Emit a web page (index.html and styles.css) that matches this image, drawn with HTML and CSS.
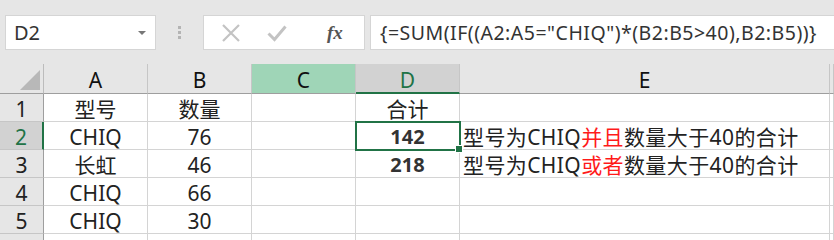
FILE: index.html
```html
<!DOCTYPE html>
<html>
    <head>
        <link rel="stylesheet" href="styles.css">
    </head>
    <body>
        <div class="toolbar">
            <div class="nameBox">
                <span>D2</span>
                <span class="dropArrow"></span>
            </div>
            <div class="grip"><i></i><i></i><i></i></div>
            <div class="fxButtons">
                <svg class="btn" width="20" height="20" viewBox="0 0 20 20"><path d="M2 2 L18 18 M18 2 L2 18" stroke="#c3c3c3" stroke-width="2.2" fill="none"/></svg>
                <svg class="btn" width="20" height="20" viewBox="0 0 20 20"><path d="M1.5 10.5 L7.5 16.5 L18.5 3.5" stroke="#c3c3c3" stroke-width="3" fill="none"/></svg>
                <span class="fx">fx</span>
            </div>
            <div class="formula">{=SUM(IF((A2:A5="CHIQ")*(B2:B5&gt;40),B2:B5))}</div>
        </div>

        <div class="sheet">
            <div class="corner"><span class="tri"></span></div>
            <div class="colHead">A</div>
            <div class="colHead">B</div>
            <div class="colHead hover">C</div>
            <div class="colHead active">D</div>
            <div class="colHead">E</div>
            <div class="colHead"></div>

            <div class="rowHead">1</div>
            <div class="cell">型号</div>
            <div class="cell">数量</div>
            <div class="cell"></div>
            <div class="cell">合计</div>
            <div class="cell"></div>
            <div class="cell"></div>

            <div class="rowHead active">2</div>
            <div class="cell">CHIQ</div>
            <div class="cell">76</div>
            <div class="cell"></div>
            <div class="cell bold selected">142</div>
            <div class="cell left">型号为CHIQ<span class="red">并且</span>数量大于40的合计</div>
            <div class="cell"></div>

            <div class="rowHead">3</div>
            <div class="cell">长虹</div>
            <div class="cell">46</div>
            <div class="cell"></div>
            <div class="cell bold">218</div>
            <div class="cell left">型号为CHIQ<span class="red">或者</span>数量大于40的合计</div>
            <div class="cell"></div>

            <div class="rowHead">4</div>
            <div class="cell">CHIQ</div>
            <div class="cell">66</div>
            <div class="cell"></div>
            <div class="cell"></div>
            <div class="cell"></div>
            <div class="cell"></div>

            <div class="rowHead">5</div>
            <div class="cell">CHIQ</div>
            <div class="cell">30</div>
            <div class="cell"></div>
            <div class="cell"></div>
            <div class="cell"></div>
            <div class="cell"></div>

            <div class="rowHead"></div>
            <div class="cell"></div>
            <div class="cell"></div>
            <div class="cell"></div>
            <div class="cell"></div>
            <div class="cell"></div>
            <div class="cell"></div>
        </div>
    </body>
</html>
```

FILE: styles.css
```css
body {
    margin: 0;
    height: 240px;
    background: white;
    font-family: "Noto Sans", "Noto Sans CJK SC", sans-serif;
    color: #222;
    overflow: hidden;
}

.toolbar {
    display: flex;
    align-items: stretch;
    height: 64px;
    box-sizing: border-box;
    padding: 15px 0 14px 5px;
    background: #e6e6e6;
}

.nameBox, .fxButtons, .formula {
    background: white;
    border: 1px solid #d5d5d5;
    box-sizing: border-box;
}

.nameBox {
    width: 151px;
    display: flex;
    align-items: center;
    justify-content: space-between;
    padding: 0 9px 0 8px;
    font-size: 20px;
    color: #333;
}

.dropArrow {
    border-left: 4px solid transparent;
    border-right: 4px solid transparent;
    border-top: 4px solid #777;
}

.grip {
    width: 47px;
    display: flex;
    flex-direction: column;
    align-items: center;
    justify-content: center;
    gap: 2px;
}

.grip i {
    width: 3px;
    height: 3px;
    background: #b4b4b4;
}

.fxButtons {
    width: 162px;
    display: flex;
    align-items: center;
    padding-left: 17px;
    gap: 26px;
}

.fx {
    font-family: "Liberation Serif", serif;
    font-style: italic;
    font-weight: bold;
    font-size: 19px;
    color: #555;
    margin-left: 14px;
}

.formula {
    flex: 1;
    margin-left: 5px;
    border-right: none;
    padding-left: 9px;
    font-size: 19.5px;
    letter-spacing: 0.5px;
    line-height: 33px;
    color: #333;
    white-space: nowrap;
}

.sheet {
    display: grid;
    grid-template-columns: 44px 104px 104px 104px 104px 370px 1fr;
    grid-template-rows: 30px repeat(6, 28px);
}

.corner, .colHead, .rowHead, .cell {
    box-sizing: border-box;
    border-right: 1px solid #d4d4d4;
    border-bottom: 1px solid #d4d4d4;
    font-size: 21px;
    text-align: center;
    white-space: nowrap;
}

.corner {
    position: relative;
    background: #e6e6e6;
    border-right-color: #bcbcbc;
    border-bottom-color: #9e9e9e;
}

.tri {
    position: absolute;
    right: 3px;
    bottom: 3px;
    border-left: 20px solid transparent;
    border-bottom: 20px solid #b8b8b8;
}

.colHead {
    background: #e6e6e6;
    border-right-color: #c6c6c6;
    border-bottom-color: #9e9e9e;
    line-height: 30px;
    padding-top: 1px;
    color: #111;
}

.colHead.hover {
    background: #9fd5b7;
}

.colHead.active {
    background: #d2d2d2;
    color: #217346;
    border-bottom: 2px solid #217346;
}

.rowHead {
    background: #e6e6e6;
    border-right-color: #9e9e9e;
    border-bottom-color: #c6c6c6;
    line-height: 30px;
    color: #222;
}

.rowHead.active {
    background: #d2d2d2;
    color: #217346;
    border-right: 2px solid #217346;
}

.cell {
    line-height: 30px;
    color: #222;
}

.cell.left {
    text-align: left;
    padding-left: 3px;
    letter-spacing: 0.4px;
}

.bold {
    font-weight: bold;
    font-size: 20px;
    color: #333;
}

.red {
    color: #ff1a1a;
}

.selected {
    position: relative;
    outline: 2px solid #217346;
    outline-offset: -1px;
}

.selected::after {
    content: "";
    position: absolute;
    right: -4px;
    bottom: -4px;
    width: 6px;
    height: 6px;
    background: #217346;
    border: 1px solid white;
}
```
